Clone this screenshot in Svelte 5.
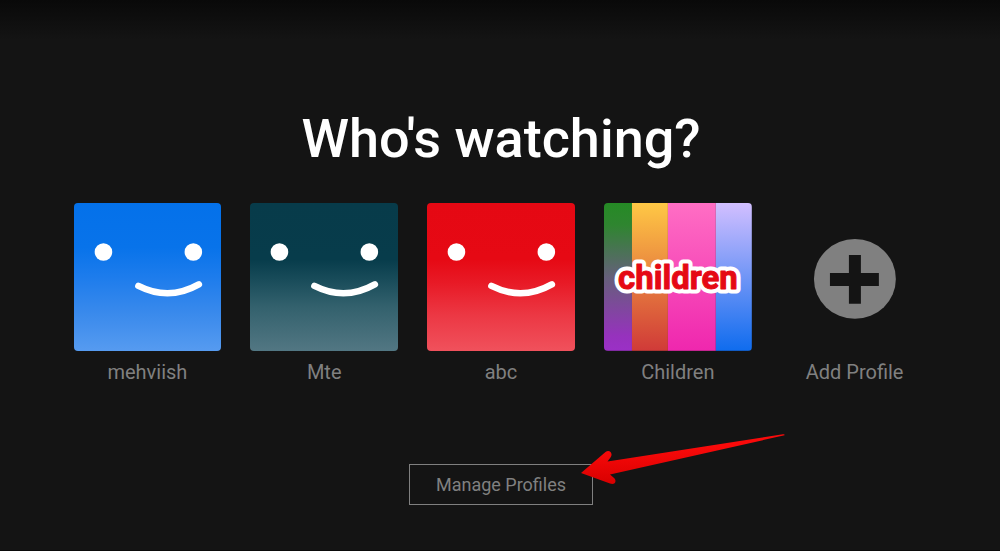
<script lang="ts">
	interface Profile {
		name: string;
		avatar: "blue" | "teal" | "red" | "children";
	}

	const profiles: Profile[] = [
		{ name: "mehviish", avatar: "blue" },
		{ name: "Mte", avatar: "teal" },
		{ name: "abc", avatar: "red" },
		{ name: "Children", avatar: "children" },
	];
</script>

<main class="page">
	<h1>Who's watching?</h1>

	<ul class="profiles">
		{#each profiles as profile}
			<li>
				<a class="profile" href="#{profile.avatar}">
					{#if profile.avatar === "children"}
						<svg class="avatar" viewBox="0 0 148 148" aria-hidden="true">
							<defs>
								<linearGradient id="stripe-green" x2="0" y2="1">
									<stop offset="0" stop-color="#258a25" />
									<stop offset="0.15" stop-color="#2f8530" />
									<stop offset="0.5" stop-color="#65607a" />
									<stop offset="0.9" stop-color="#9632bd" />
									<stop offset="1" stop-color="#9b30c6" />
								</linearGradient>
								<linearGradient id="stripe-yellow" x2="0" y2="1">
									<stop offset="0" stop-color="#ffc845" />
									<stop offset="1" stop-color="#d03a38" />
								</linearGradient>
								<linearGradient id="stripe-pink" x2="0" y2="1">
									<stop offset="0" stop-color="#ff6ec4" />
									<stop offset="1" stop-color="#ef27ae" />
								</linearGradient>
								<linearGradient id="stripe-blue" x2="0" y2="1">
									<stop offset="0" stop-color="#d2bfff" />
									<stop offset="1" stop-color="#0f6cee" />
								</linearGradient>
							</defs>
							<rect width="28" height="148" fill="url(#stripe-green)" />
							<rect x="28" width="36" height="148" fill="url(#stripe-yellow)" />
							<rect x="64" width="48" height="148" fill="url(#stripe-pink)" />
							<rect x="112" width="36" height="148" fill="url(#stripe-blue)" />
							<text class="logo outline" x="74" y="86">children</text>
							<text class="logo" x="74" y="86">children</text>
						</svg>
					{:else}
						<svg class="avatar {profile.avatar}" viewBox="0 0 148 148" aria-hidden="true">
							<circle cx="29.5" cy="49" r="8.8" fill="#fff" />
							<circle cx="119.5" cy="49" r="8.8" fill="#fff" />
							<path
								d="M64.5 83Q95 98.500 125 81.500"
								fill="none"
								stroke="#fff"
								stroke-width="6.600"
								stroke-linecap="round"
							/>
						</svg>
					{/if}
					<span>{profile.name}</span>
				</a>
			</li>
		{/each}
		<li>
			<a class="profile" href="#add">
				<svg class="avatar" viewBox="0 0 148 148" aria-hidden="true">
					<ellipse cx="74" cy="76" rx="41" ry="40" fill="#808080" />
					<path d="M68 52h12v18h18v13H80v18H68V83H49V70h19z" fill="#141414" />
				</svg>
				<span>Add Profile</span>
			</a>
		</li>
	</ul>

	<div class="manage">
		<button type="button">Manage Profiles</button>
		<svg class="arrow" viewBox="0 0 206 54" aria-hidden="true">
			<defs>
				<linearGradient id="arrow-fill" x1="0" y1="0" x2="0.1" y2="1">
					<stop offset="0.3" stop-color="#fa0a0a" />
					<stop offset="1" stop-color="#d80000" />
				</linearGradient>
			</defs>
			<path
				d="M0 40L24.500 19C28.500 16 32.500 20.500 29.500 24.500L26.500 28.500L202 1.200Q204 1 203.500 2.300L29 41.500L32.500 44.500C36.500 47.500 34 52.500 29 50.500Z"
				fill="url(#arrow-fill)"
			/>
		</svg>
	</div>
</main>

<style>
	:global(body) {
		margin: 0;
		background: #141414;
	}

	.page {
		box-sizing: border-box;
		display: flex;
		flex-direction: column;
		align-items: center;
		min-height: 100vh;
		padding: 108px 24px 40px 26px;
		background: linear-gradient(#090909, #141414 40px);
		border-bottom: 1px solid #0a0a0a;
		color: #808080;
		font-family: Roboto, "Liberation Sans", sans-serif;
	}

	h1 {
		margin: 0;
		color: #fff;
		font-size: 54px;
		font-weight: 500;
		line-height: 62px;
		text-align: center;
	}

	.profiles {
		display: grid;
		grid-template-columns: repeat(5, 1fr);
		gap: 29px;
		width: 100%;
		max-width: 855px;
		margin: 33px 0 0;
		padding: 0;
		list-style: none;
	}

	.profile {
		display: flex;
		flex-direction: column;
		gap: 9px;
		color: inherit;
		font-size: 20px;
		line-height: 24px;
		text-align: center;
		text-decoration: none;
	}

	.profile:hover {
		color: #e5e5e5;
	}

	.avatar {
		display: block;
		width: 100%;
		border-radius: 4px;
	}

	.blue {
		background: linear-gradient(#0471ea, #0873ea 30%, #1d7cec 50%, #3a8aec 75%, #569bf0);
	}

	.teal {
		background: linear-gradient(#073b4a, #073c4b 38%, #194c5a 52%, #33616d 70%, #527783);
	}

	.red {
		background: linear-gradient(#e50813, #e60914 38%, #e81a26 54%, #ec3844 76%, #f0515c);
	}

	.logo {
		fill: #e50914;
		stroke: #e50914;
		stroke-width: 1px;
		stroke-linejoin: round;
		font-size: 33px;
		font-weight: 700;
		text-anchor: middle;
	}

	.outline {
		fill: #fff;
		stroke: #fff;
		stroke-width: 9px;
	}

	.manage {
		position: relative;
		margin-top: 80px;
	}

	button {
		padding: 8px 26px;
		background: transparent;
		border: 1px solid #808080;
		color: inherit;
		cursor: pointer;
		font: inherit;
		font-size: 18px;
		line-height: 23px;
	}

	button:hover {
		border-color: #fff;
		color: #fff;
	}

	.arrow {
		position: absolute;
		top: -31px;
		left: 172px;
		width: 206px;
		height: 54px;
		pointer-events: none;
	}
</style>
